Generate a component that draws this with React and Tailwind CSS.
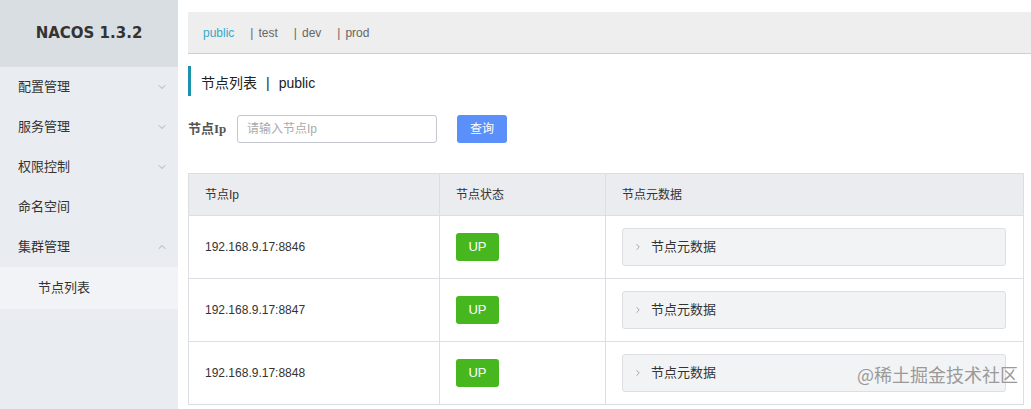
import React from 'react';
import { ChevronDown, ChevronUp, ChevronRight } from 'lucide-react';

const menus = [
  { label: '配置管理', icon: 'down' },
  { label: '服务管理', icon: 'down' },
  { label: '权限控制', icon: 'down' },
  { label: '命名空间' },
  { label: '集群管理', icon: 'up' },
];

const nodes = ['192.168.9.17:8846', '192.168.9.17:8847', '192.168.9.17:8848'];

const App = () => {
  return (
    <div
      className="relative flex h-[409px] w-[1031px] overflow-hidden bg-white text-[#333]"
      style={{ fontFamily: '"Liberation Sans", "Noto Sans CJK SC", sans-serif' }}
    >
      {/* Sidebar */}
      <aside className="flex w-[178px] shrink-0 flex-col bg-[#e9ecf0]">
        <div className="flex h-[67px] items-center justify-center bg-[#d9dee3] text-[15px] font-bold text-[#333]" style={{ fontFamily: '"DejaVu Sans", sans-serif' }}>
          NACOS 1.3.2
        </div>
        {menus.map((m) => (
          <div key={m.label} className="flex h-[40px] items-center justify-between pl-[18px] pr-[10px] text-[13px] text-[#333]">
            <span>{m.label}</span>
            {m.icon === 'down' && <ChevronDown className="h-[12px] w-[12px] text-[#999]" strokeWidth={1.5} />}
            {m.icon === 'up' && <ChevronUp className="h-[12px] w-[12px] text-[#999]" strokeWidth={1.5} />}
          </div>
        ))}
        <div className="flex h-[42px] items-center bg-[#f1f3f6] pl-[38px] text-[13px] text-[#333]">节点列表</div>
      </aside>

      {/* Main */}
      <main className="ml-[10px] flex flex-1 flex-col pt-[12px] pr-[7px]">
        <div className="-mr-[7px] flex h-[42px] items-center gap-[16px] border-b border-[#cfcfcf] bg-[#eeeeee] pl-[15px] text-[12px] text-[#666]">
          <span className="text-[#35a9c8]">public</span>
          <span><span className="mr-[5px]">|</span>test</span>
          <span><span className="mr-[5px]">|</span>dev</span>
          <span><span className="mr-[5px]">|</span>prod</span>
        </div>

        <div className="mt-[12px] flex h-[30px] items-center border-l-[3px] border-[#1b93ad] pl-[10px] pt-[4px] text-[14px] text-[#222]">
          <span>节点列表</span>
          <span className="mx-[9px]">|</span>
          <span>public</span>
        </div>

        <div className="mt-[19px] flex items-center">
          <span className="w-[49px] text-[13px] font-bold text-[#555]" style={{ fontFamily: '"Liberation Serif", "Noto Sans CJK SC", serif' }}>节点Ip</span>
          <div className="flex h-[28px] w-[200px] items-center rounded-[3px] border border-[#c4c6cf] pl-[9px] text-[12px] text-[#aaa]">请输入节点Ip</div>
          <button className="ml-[20px] h-[28px] w-[50px] rounded-[3px] bg-[#5b8ff9] text-[12px] text-white">查询</button>
        </div>

        <div className="mt-[30px] border border-[#dcdee3]">
          <div className="flex h-[41px] bg-[#ebecf0] text-[12px] text-[#333]">
            <div className="flex w-[251px] items-center border-r border-[#dcdee3] pl-[16px]">节点Ip</div>
            <div className="flex w-[166px] items-center border-r border-[#dcdee3] pl-[16px]">节点状态</div>
            <div className="flex flex-1 items-center pl-[16px]">节点元数据</div>
          </div>
          {nodes.map((ip) => (
            <div key={ip} className="flex h-[63px] border-t border-[#dcdee3] text-[12px]">
              <div className="flex w-[251px] items-center border-r border-[#dcdee3] pl-[16px] text-[#333]">{ip}</div>
              <div className="flex w-[166px] items-center border-r border-[#dcdee3] pl-[16px]">
                <span className="flex h-[28px] w-[43px] items-center justify-center rounded-[3px] bg-[#46b71f] text-[13px] text-white">UP</span>
              </div>
              <div className="flex flex-1 items-center pl-[16px] pr-[17px]">
                <div className="flex h-[38px] flex-1 items-center rounded-[3px] border border-[#dcdee3] bg-[#f2f3f5] pl-[10px] text-[13px] text-[#333]">
                  <ChevronRight className="mr-[8px] h-[10px] w-[10px] text-[#777]" strokeWidth={1.5} />
                  节点元数据
                </div>
              </div>
            </div>
          ))}
        </div>
      </main>

      <div className="absolute bottom-[21px] right-[13px] text-[18px] text-[#9a9a9a]" style={{ fontFamily: '"Noto Sans CJK SC", sans-serif' }}>
        @稀土掘金技术社区
      </div>
    </div>
  );
};

export default App;
